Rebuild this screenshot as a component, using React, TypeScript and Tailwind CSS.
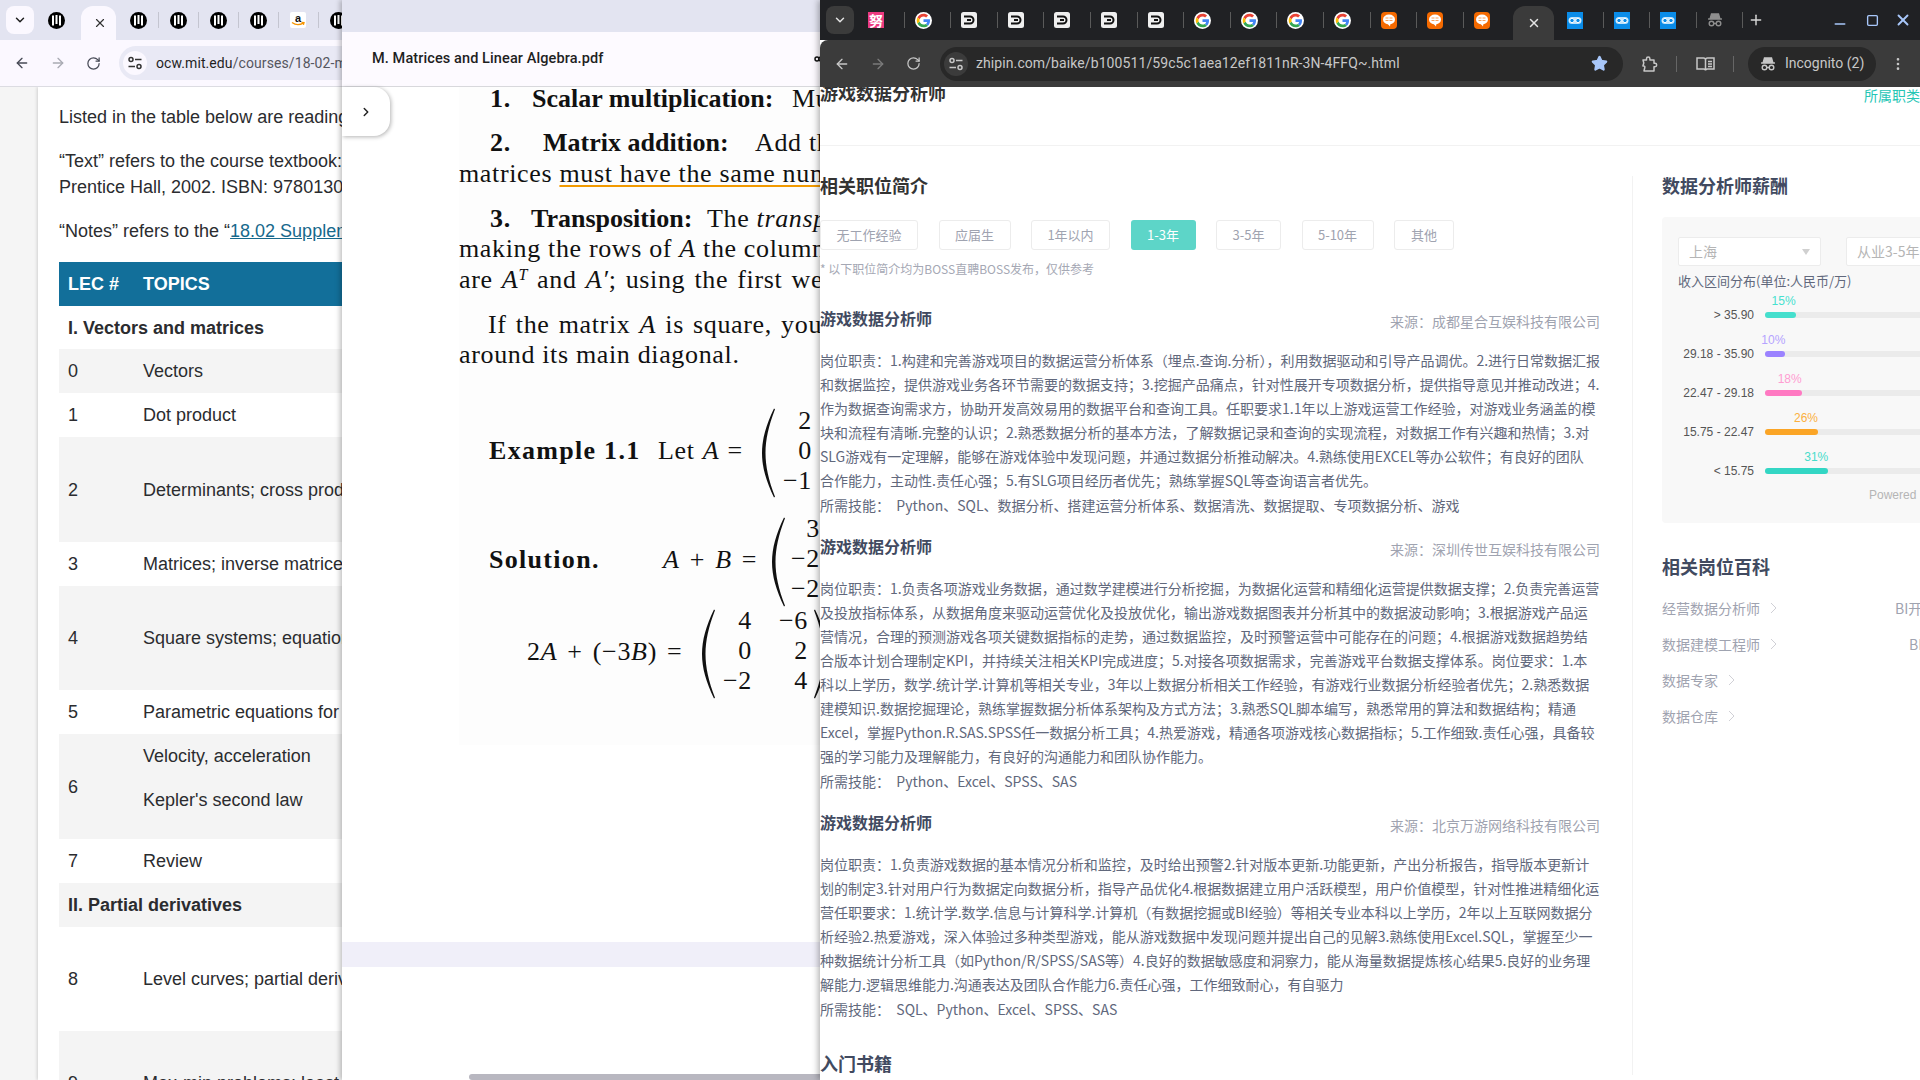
import { ArrowLeft, ArrowRight, RotateCw, ChevronDown, ChevronRight, X, Star, Plus, Minus, Square, EllipsisVertical, Share2 } from "lucide-react";

const ROWS = [
  { lec: "", text: "I. Vectors and matrices", h: "h-[43px]", bold: true },
  { lec: "0", text: "Vectors", h: "h-[44px]" },
  { lec: "1", text: "Dot product", h: "h-[44px]" },
  { lec: "2", text: "Determinants; cross product", h: "h-[105px]" },
  { lec: "3", text: "Matrices; inverse matrices", h: "h-[44px]" },
  { lec: "4", text: "Square systems; equations of planes", h: "h-[104px]" },
  { lec: "5", text: "Parametric equations for lines and curves", h: "h-[44px]" },
  { lec: "6", text: "Velocity, acceleration", text2: "Kepler's second law", h: "h-[105px]" },
  { lec: "7", text: "Review", h: "h-[44px]" },
  { lec: "", text: "II. Partial derivatives", h: "h-[44px]", bold: true },
  { lec: "8", text: "Level curves; partial derivatives; tangent plane", h: "h-[104px]" },
  { lec: "9", text: "Max-min problems; least squares", h: "h-[104px]" },
];

const JOBS = [
  {
    source: "来源：成都星合互娱科技有限公司",
    lines: [
      "岗位职责：1.构建和完善游戏项目的数据运营分析体系（埋点.查询.分析），利用数据驱动和引导产品调优。2.进行日常数据汇报",
      "和数据监控，提供游戏业务各环节需要的数据支持；3.挖掘产品痛点，针对性展开专项数据分析，提供指导意见并推动改进；4.",
      "作为数据查询需求方，协助开发高效易用的数据平台和查询工具。任职要求1.1年以上游戏运营工作经验，对游戏业务涵盖的模",
      "块和流程有清晰.完整的认识；2.熟悉数据分析的基本方法，了解数据记录和查询的实现流程，对数据工作有兴趣和热情；3.对",
      "SLG游戏有一定理解，能够在游戏体验中发现问题，并通过数据分析推动解决。4.熟练使用EXCEL等办公软件；有良好的团队",
      "合作能力，主动性.责任心强；5.有SLG项目经历者优先；熟练掌握SQL等查询语言者优先。",
    ],
    skills: "Python、SQL、数据分析、搭建运营分析体系、数据清洗、数据提取、专项数据分析、游戏",
  },
  {
    source: "来源：深圳传世互娱科技有限公司",
    lines: [
      "岗位职责：1.负责各项游戏业务数据，通过数学建模进行分析挖掘，为数据化运营和精细化运营提供数据支撑；2.负责完善运营",
      "及投放指标体系，从数据角度来驱动运营优化及投放优化，输出游戏数据图表并分析其中的数据波动影响；3.根据游戏产品运",
      "营情况，合理的预测游戏各项关键数据指标的走势，通过数据监控，及时预警运营中可能存在的问题；4.根据游戏数据趋势结",
      "合版本计划合理制定KPI，并持续关注相关KPI完成进度；5.对接各项数据需求，完善游戏平台数据支撑体系。岗位要求：1.本",
      "科以上学历，数学.统计学.计算机等相关专业，3年以上数据分析相关工作经验，有游戏行业数据分析经验者优先；2.熟悉数据",
      "建模知识.数据挖掘理论，熟练掌握数据分析体系架构及方式方法；3.熟悉SQL脚本编写，熟悉常用的算法和数据结构；精通",
      "Excel，掌握Python.R.SAS.SPSS任一数据分析工具；4.热爱游戏，精通各项游戏核心数据指标；5.工作细致.责任心强，具备较",
      "强的学习能力及理解能力，有良好的沟通能力和团队协作能力。",
    ],
    skills: "Python、Excel、SPSS、SAS",
  },
  {
    source: "来源：北京万游网络科技有限公司",
    lines: [
      "岗位职责：1.负责游戏数据的基本情况分析和监控，及时给出预警2.针对版本更新.功能更新，产出分析报告，指导版本更新计",
      "划的制定3.针对用户行为数据定向数据分析，指导产品优化4.根据数据建立用户活跃模型，用户价值模型，针对性推进精细化运",
      "营任职要求：1.统计学.数学.信息与计算科学.计算机（有数据挖掘或BI经验）等相关专业本科以上学历，2年以上互联网数据分",
      "析经验2.热爱游戏，深入体验过多种类型游戏，能从游戏数据中发现问题并提出自己的见解3.熟练使用Excel.SQL，掌握至少一",
      "种数据统计分析工具（如Python/R/SPSS/SAS等）4.良好的数据敏感度和洞察力，能从海量数据提炼核心结果5.良好的业务理",
      "解能力.逻辑思维能力.沟通表达及团队合作能力6.责任心强，工作细致耐心，有自驱力",
    ],
    skills: "SQL、Python、Excel、SPSS、SAS",
  },
];

const SALARY = [
  { label: "> 35.90", pct: 15, bar: "bg-[#45dfcd]", text: "text-[#47e1cf]" },
  { label: "29.18 - 35.90", pct: 10, bar: "bg-[#9b82ff]", text: "text-[#b5a3ff]" },
  { label: "22.47 - 29.18", pct: 18, bar: "bg-[#ff79c2]", text: "text-[#ff9dd2]" },
  { label: "15.75 - 22.47", pct: 26, bar: "bg-[#fba526]", text: "text-[#fbb040]" },
  { label: "< 15.75", pct: 31, bar: "bg-[#33d6c4]", text: "text-[#47dccb]" },
];

const FILTERS = [
  { label: "无工作经验", w: "w-[98px]" },
  { label: "应届生", w: "w-[72px]" },
  { label: "1年以内", w: "w-[79px]" },
  { label: "1-3年", w: "w-[65px]", active: true },
  { label: "3-5年", w: "w-[65px]" },
  { label: "5-10年", w: "w-[72px]" },
  { label: "其他", w: "w-[60px]" },
];

const RELATED = [
  { a: "经营数据分析师", b: "BI开发工程师", bw: "ml-[0px]" },
  { a: "数据建模工程师", b: "BI工程师", bw: "ml-[14px]" },
  { a: "数据专家" },
  { a: "数据仓库" },
];

function TuneIcon({ color }: { color: string }) {
  return (
    <svg width="16" height="16" viewBox="0 0 16 16" fill="none" stroke={color} strokeWidth="1.5">
      <circle cx="4" cy="4.5" r="2" />
      <path d="M8 4.5h6.5M1.5 11.5H8" />
      <circle cx="12" cy="11.5" r="2" />
    </svg>
  );
}

function MitIcon() {
  return (
    <svg width="17" height="17" viewBox="0 0 17 17">
      <circle cx="8.5" cy="8.5" r="8.5" fill="#000" />
      <path d="M4 3.5h2v10H4zM7.5 3h2v9h-2zM11 3.5h2v10h-2z" fill="#fff" />
    </svg>
  );
}

function AmazonIcon() {
  return (
    <svg width="16" height="16" viewBox="0 0 16 16">
      <rect width="16" height="16" rx="2" fill="#fff" />
      <text x="8" y="9.5" textAnchor="middle" fontSize="11" fontWeight="700" fontFamily="Liberation Sans" fill="#111">a</text>
      <path d="M2 10.5c3.5 2.6 8 2.6 11.5.4M11.5 10.5l2.5.1-.6 2.2" fill="none" stroke="#f79400" strokeWidth="1.3" />
    </svg>
  );
}

function GoogleIcon() {
  return (
    <svg width="17" height="17" viewBox="-6 -6 60 60">
      <circle cx="24" cy="24" r="30" fill="#fff" />
      <path fill="#EA4335" d="M24 9.5c3.54 0 6.71 1.22 9.21 3.6l6.85-6.85C35.9 2.38 30.47 0 24 0 14.62 0 6.51 5.38 2.56 13.22l7.98 6.19C12.43 13.72 17.74 9.5 24 9.5z" />
      <path fill="#4285F4" d="M46.98 24.55c0-1.57-.15-3.09-.38-4.55H24v9.02h12.94c-.58 2.96-2.26 5.48-4.78 7.18l7.73 6c4.51-4.18 7.09-10.36 7.09-17.65z" />
      <path fill="#FBBC05" d="M10.53 28.59c-.48-1.45-.76-2.99-.76-4.59s.27-3.14.76-4.59l-7.98-6.19C.92 16.46 0 20.12 0 24c0 3.88.92 7.54 2.56 10.78l7.97-6.19z" />
      <path fill="#34A853" d="M24 48c6.48 0 11.93-2.13 15.89-5.81l-7.73-6c-2.15 1.45-4.92 2.3-8.16 2.3-6.26 0-11.57-4.22-13.47-9.91l-7.98 6.19C6.51 42.62 14.62 48 24 48z" />
    </svg>
  );
}

function DocIcon() {
  return (
    <svg width="16" height="16" viewBox="0 0 16 16">
      <rect width="16" height="16" rx="2.5" fill="#efefef" />
      <path d="M3 4.5h6a3.5 3.5 0 0 1 0 7H3" fill="none" stroke="#111" strokeWidth="2" />
      <path d="M6 8h4" stroke="#111" strokeWidth="2" />
    </svg>
  );
}

function ChatIcon() {
  return (
    <svg width="16" height="17" viewBox="0 0 16 17">
      <rect width="16" height="17" rx="4" fill="#f56a00" />
      <ellipse cx="8" cy="7.5" rx="6" ry="5" fill="#fff" />
      <path d="M6 11l3 3.5.5-3.5z" fill="#fff" />
      <path d="M4.5 6h3M8.5 6h3M4.5 8.5h3M8.5 8.5h3" stroke="#f9a05c" strokeWidth="1.2" />
    </svg>
  );
}

function BlueIcon() {
  return (
    <svg width="16" height="17" viewBox="0 0 16 17">
      <rect width="16" height="17" fill="#0a8ce8" />
      <rect x="1.5" y="5" width="13" height="7" rx="3.5" fill="#bfe3fb" />
      <circle cx="5" cy="8.5" r="2.2" fill="#0a8ce8" stroke="#fff" />
      <circle cx="11" cy="8.5" r="2.2" fill="#0a8ce8" stroke="#fff" />
    </svg>
  );
}

function IncognitoIcon({ color, size = 16 }: { color: string; size?: number }) {
  return (
    <svg width={size} height={size} viewBox="0 0 16 16" fill="none" stroke={color} strokeWidth="1.4">
      <path d="M4.5 2h7l1.3 4.5H3.2z" fill={color} />
      <path d="M1 7h14" />
      <circle cx="4.5" cy="11.5" r="2.3" />
      <circle cx="11.5" cy="11.5" r="2.3" />
      <path d="M6.8 11.5h2.4" />
    </svg>
  );
}

function ExtensionIcon() {
  return (
    <svg width="18" height="18" viewBox="0 0 18 18" fill="none" stroke="#c7c7c7" strokeWidth="1.5" className="flex-none">
      <path d="M3 5h3.5V3.8a1.7 1.7 0 0 1 3.4 0V5H14v3.3h1a1.7 1.7 0 0 1 0 3.4h-1V16H4l.8-3.5c.2-.8-.2-1.5-1-1.5H2.9l.9-3z" strokeLinejoin="round" />
    </svg>
  );
}

function ReaderIcon() {
  return (
    <svg width="19" height="18" viewBox="0 0 19 18" fill="none" stroke="#c7c7c7" strokeWidth="1.5" className="flex-none">
      <path d="M1 3h6.5c1.2 0 2 .8 2 2v10.5c0-1-.8-1.5-2-1.5H1zM18 3h-6.500c-1.200 0-2 .8-2 2v10.500c0-1 .8-1.500 2-1.500H18z" />
      <path d="M12 6.500h4M12 9h4M12 11.500h4" />
    </svg>
  );
}

function PinkIcon() {
  return (
    <div className="flex h-4 w-4 items-center justify-center overflow-hidden bg-[#ec3a80] text-[14px] font-bold leading-4 text-white font-['Noto_Sans_CJK_SC',sans-serif]">
      努
    </div>
  );
}

function LeftTab({ children }: { children: React.ReactNode }) {
  return (
    <div className="flex h-full w-10 flex-none items-center pl-[11px]">
      {children}
      <div className="ml-auto h-4 w-px bg-[#c4c5d0]" />
    </div>
  );
}

function DarkTab({ children, noSep }: { children: React.ReactNode; noSep?: boolean }) {
  return (
    <div className="flex h-full w-[46.6px] flex-none items-center pl-[10px]">
      {children}
      {!noSep && <div className="ml-auto h-4 w-px bg-[#5a5a5a]" />}
    </div>
  );
}

function LeftWindow() {
  return (
    <div className="absolute left-0 top-0 flex h-[1080px] w-[342px] flex-col overflow-hidden font-['Roboto',sans-serif]">
      <div className="flex h-10 flex-none items-center bg-[#e3e4f1]">
        <div className="ml-[6px] mr-[3px] flex h-7 w-7 flex-none items-center justify-center rounded-lg bg-[#fbf8ff]">
          <ChevronDown size={14} strokeWidth={2.5} color="#1f1f1f" />
        </div>
        <div className="flex h-full w-11 flex-none items-center pl-[11px]">
          <MitIcon />
        </div>
        <div className="mt-[6px] flex h-[34px] w-[35px] flex-none items-center justify-center rounded-t-xl bg-[#fbf8ff] pl-[3px]">
          <X size={14} strokeWidth={2} color="#333" />
        </div>
        <div className="ml-[3px] flex h-full">
          <LeftTab><MitIcon /></LeftTab>
          <LeftTab><MitIcon /></LeftTab>
          <LeftTab><MitIcon /></LeftTab>
          <LeftTab><MitIcon /></LeftTab>
          <LeftTab><AmazonIcon /></LeftTab>
          <LeftTab><MitIcon /></LeftTab>
        </div>
      </div>
      <div className="flex h-[47px] flex-none items-center border-b border-[#dcdce2] bg-[#fbf8ff]">
        <ArrowLeft size={16} strokeWidth={2} color="#474a56" className="ml-[14px] flex-none" />
        <ArrowRight size={16} strokeWidth={2} color="#a9aab3" className="ml-5 flex-none" />
        <RotateCw size={15} strokeWidth={2} color="#474a56" className="ml-5 flex-none" />
        <div className="ml-[18px] flex h-[34px] w-[400px] flex-none items-center rounded-l-full bg-[#e9e9f5]">
          <div className="ml-[4px] flex h-[24px] w-[24px] flex-none items-center justify-center rounded-full bg-[#fbf8ff]">
            <TuneIcon color="#333" />
          </div>
          <span className="ml-[9px] whitespace-nowrap text-[14px] tracking-[0.09px] text-[#1f1f1f]">
            ocw.mit.edu<span className="text-[#55565f]">/courses/18-02-multivariable</span>
          </span>
        </div>
      </div>
      <div className="flex-1 overflow-hidden bg-[#f5f5f5] pl-[38px] font-['Liberation_Sans',sans-serif]">
        <div className="h-full w-[400px] bg-white pl-[21px] text-[18px] leading-[26px] text-[#2b2c2f] shadow-[-1px_0_3px_rgba(0,0,0,0.15)]">
          <p className="whitespace-nowrap pt-[17px]">Listed in the table below are reading assignments</p>
          <p className="mt-[18px] whitespace-nowrap">
            “Text” refers to the course textbook: Edwards<br />
            Prentice Hall, 2002. ISBN: 9780130339676
          </p>
          <p className="mt-[18px] whitespace-nowrap">
            “Notes” refers to the “<span className="text-[#17698c] underline">18.02 Supplementary Notes</span>
          </p>
          <div className="mt-[18px] flex h-11 items-center bg-[#126f9a] font-bold text-white">
            <span className="w-[84px] pl-[9px]">LEC #</span>
            <span>TOPICS</span>
          </div>
          {ROWS.map((r, i) => (
            <div key={i} className={`flex items-center whitespace-nowrap ${r.h} ${i % 2 === 1 ? "bg-[#f4f4f4]" : "bg-white"}`}>
              {r.bold ? (
                <span className="pl-[9px] font-bold">{r.text}</span>
              ) : (
                <>
                  <span className="w-[84px] flex-none pl-[9px]">{r.lec}</span>
                  {r.text2 ? (
                    <div className="flex flex-col gap-[18px] pb-[17px]">
                      <span>{r.text}</span>
                      <span>{r.text2}</span>
                    </div>
                  ) : (
                    <span>{r.text}</span>
                  )}
                </>
              )}
            </div>
          ))}
        </div>
      </div>
    </div>
  );
}

function Paren({ flip }: { flip?: boolean }) {
  return (
    <svg width="13" height="90" viewBox="0 0 13 90" className={`flex-none ${flip ? "-scale-x-100" : ""}`}>
      <path d="M12 0.5C4 17 0 31 0 45s4 28 12 44.5l1-.8C6.5 72 3.5 58 3.500 45S6.500 18 13 1.300z" fill="#111" />
    </svg>
  );
}

function Col({ w, items, cls }: { w: string; items: string[]; cls: string }) {
  return (
    <div className={`flex flex-none flex-col items-end text-[26px] leading-[30px] ${w} ${cls}`}>
      {items.map((v, i) => (
        <span key={i}>{v}</span>
      ))}
    </div>
  );
}

function PdfWindow() {
  return (
    <div className="absolute left-[342px] top-0 flex h-[1080px] w-[600px] flex-col overflow-hidden shadow-[-2px_0_5px_rgba(0,0,0,0.25)]">
      <div className="h-8 flex-none bg-[#e3e4f1]" />
      <div className="flex h-[55px] flex-none items-center border-b border-[#d8d8dc] bg-[#fdfaff] pl-[30px] font-['Roboto',sans-serif] text-[14.5px] font-medium tracking-[0.1px] text-[#1f1f1f]">
        <span className="w-[441px] flex-none">M. Matrices and Linear Algebra.pdf</span>
        <Share2 size={16} strokeWidth={2.2} color="#111" className="flex-none" />
      </div>
      <div className="relative flex flex-1 flex-col bg-white">
        <div className="absolute left-0 top-0 flex h-[49px] w-[48px] items-center justify-center rounded-r-2xl bg-white shadow-[1px_1px_4px_rgba(0,0,0,0.3)]">
          <ChevronRight size={14} strokeWidth={2.5} color="#222" />
        </div>
        <div className="ml-[117px] h-[658px] flex-none overflow-hidden bg-[#fdfdfd] whitespace-nowrap font-['Liberation_Serif',serif] text-[26px] leading-[30px] tracking-[0.025em] text-[#111]">
          <div className="-mt-[3px] ml-[31px] flex">
            <span className="w-[42px] font-bold">1.</span>
            <span className="w-[260px] font-bold tracking-normal">Scalar multiplication:</span>
            <span>Multiply</span>
          </div>
          <div className="ml-[31px] mt-[14px] flex">
            <span className="w-[53px] font-bold">2.</span>
            <span className="w-[212px] font-bold tracking-normal">Matrix addition:</span>
            <span>Add the</span>
          </div>
          <div className="mt-[1px]">
            matrices <span className="underline decoration-[#f29a00] decoration-2 underline-offset-[3px]">must have the same number of rows</span>
          </div>
          <div className="ml-[31px] mt-[15px] flex">
            <span className="w-[41px] font-bold">3.</span>
            <span className="w-[176px] font-bold tracking-normal">Transposition:</span>
            <span>The <em>transpose</em></span>
          </div>
          <div>making the rows of <em>A</em> the columns</div>
          <div className="mt-[1px] [word-spacing:2px]">are <em>A</em><sup className="text-[16px] italic">T</sup> and <em>A′</em>; using the first we</div>
          <div className="ml-[29px] mt-[15px] [word-spacing:2px]">If the matrix <em>A</em> is square, you</div>
          <div>around its main diagonal.</div>

          <div className="ml-[30px] mt-[38px] flex h-[90px] items-start">
            <span className="mt-[28px] w-[169px] flex-none font-bold tracking-[0.05em]">Example 1.1</span>
            <span className="mt-[28px] w-[104px] flex-none [word-spacing:1px]">Let <em>A</em> =</span>
            <Paren />
            <Col w="w-[37px]" cls="-mt-[2px]" items={["2", "0", "−1"]} />
          </div>
          <div className="ml-[30px] mt-[19px] flex h-[90px] items-start">
            <span className="mt-[28px] w-[174px] flex-none font-bold tracking-[0.05em]">Solution.</span>
            <span className="mt-[28px] w-[109px] flex-none [word-spacing:3px]"><em>A</em> + <em>B</em> =</span>
            <Paren />
            <Col w="w-[35px]" cls="-mt-[3px]" items={["3", "−2", "−2"]} />
          </div>
          <div className="ml-[68px] mt-[2px] flex h-[90px] items-start">
            <span className="mt-[28px] w-[175px] flex-none [word-spacing:3px]">2<em>A</em> + (−3<em>B</em>) =</span>
            <Paren />
            <Col w="w-[37px]" cls="-mt-[3px]" items={["4", "0", "−2"]} />
            <Col w="w-[56px]" cls="-mt-[3px]" items={["−6", "2", "4"]} />
            <div className="ml-[6px]"><Paren flip /></div>
          </div>
        </div>
        <div className="h-[197px] flex-none" />
        <div className="h-[25px] flex-none bg-[#f0eff9]" />
        <div className="absolute bottom-0 left-[127px] h-[6px] w-[400px] rounded-l-full bg-[#b8b7c0]" />
      </div>
    </div>
  );
}

function RightWindow() {
  return (
    <div className="absolute left-[820px] top-0 flex h-[1080px] w-[1100px] flex-col overflow-hidden bg-white shadow-[-2px_0_6px_rgba(0,0,0,0.3)]">
      <div className="flex h-10 flex-none items-center bg-[#202124] font-['Roboto',sans-serif]">
        <div className="ml-[6px] mr-[4px] flex h-7 w-7 flex-none items-center justify-center rounded-lg bg-[#3b3b3b]">
          <ChevronDown size={14} strokeWidth={2.5} color="#e3e3e3" />
        </div>
        <div className="flex h-full">
          <DarkTab><PinkIcon /></DarkTab>
          <DarkTab><GoogleIcon /></DarkTab>
          <DarkTab><DocIcon /></DarkTab>
          <DarkTab><DocIcon /></DarkTab>
          <DarkTab><DocIcon /></DarkTab>
          <DarkTab><DocIcon /></DarkTab>
          <DarkTab><DocIcon /></DarkTab>
          <DarkTab><GoogleIcon /></DarkTab>
          <DarkTab><GoogleIcon /></DarkTab>
          <DarkTab><GoogleIcon /></DarkTab>
          <DarkTab><GoogleIcon /></DarkTab>
          <DarkTab><ChatIcon /></DarkTab>
          <DarkTab><ChatIcon /></DarkTab>
          <DarkTab noSep><ChatIcon /></DarkTab>
          <div className="flex h-full w-[46.6px] flex-none justify-center pt-[6px]">
            <div className="flex h-[34px] w-[41px] items-center justify-center rounded-t-xl bg-[#3b3b3b]">
              <X size={14} strokeWidth={2.5} color="#e3e3e3" />
            </div>
          </div>
          <DarkTab><BlueIcon /></DarkTab>
          <DarkTab><BlueIcon /></DarkTab>
          <DarkTab><BlueIcon /></DarkTab>
          <DarkTab><IncognitoIcon color="#8e8e8e" /></DarkTab>
        </div>
        <Plus size={16} strokeWidth={2.2} color="#d6d6d6" className="ml-[5px] flex-none" />
        <Minus size={16} strokeWidth={2.5} color="#a8c7fa" className="ml-[68px] mt-2 flex-none" />
        <Square size={13} strokeWidth={2.5} color="#a8c7fa" className="ml-[18px] flex-none" />
        <X size={18} strokeWidth={2.5} color="#a8c7fa" className="ml-[15px] flex-none" />
      </div>
      <div className="z-10 flex h-[47px] flex-none items-center rounded-tl-lg bg-[#3b3b3b] font-['Roboto',sans-serif]">
        <ArrowLeft size={16} strokeWidth={2} color="#c7c7c7" className="ml-[14px] flex-none" />
        <ArrowRight size={16} strokeWidth={2} color="#7b7b7b" className="ml-5 flex-none" />
        <RotateCw size={15} strokeWidth={2} color="#c7c7c7" className="ml-5 flex-none" />
        <div className="ml-[19px] flex h-[34px] w-[683px] flex-none items-center rounded-full bg-[#282828]">
          <div className="ml-[4px] flex h-[24px] w-[24px] flex-none items-center justify-center rounded-full bg-[#3b3b3b]">
            <TuneIcon color="#c7c7c7" />
          </div>
          <span className="ml-[8px] whitespace-nowrap text-[14px] tracking-[0.09px] text-[#c7c7c7]">zhipin.com/baike/b100511/59c5c1aea12ef1811nR-3N-4FFQ~.html</span>
          <Star size={17} fill="#a8c7fa" color="#a8c7fa" className="ml-auto mr-[15px] flex-none" />
        </div>
        <div className="ml-[17px] flex-none"><ExtensionIcon /></div>
        <div className="ml-[18px] h-4 w-px flex-none bg-[#666]" />
        <div className="ml-[19px] flex-none"><ReaderIcon /></div>
        <div className="ml-[18px] h-4 w-px flex-none bg-[#666]" />
        <div className="ml-[14px] flex h-[34px] w-[128px] flex-none items-center rounded-full bg-[#282828] pl-[12px] text-[14px] text-[#c7c7c7]">
          <IncognitoIcon color="#c7c7c7" />
          <span className="ml-[9px] whitespace-nowrap">Incognito (2)</span>
        </div>
        <EllipsisVertical size={16} strokeWidth={2} color="#c7c7c7" className="ml-[14px] flex-none" />
      </div>
      <div className="flex-1 overflow-hidden font-['Noto_Sans_CJK_SC',sans-serif]">
        <div className="-mt-[7px] flex h-[66px] items-start justify-between border-b border-[#f2f2f2]">
          <span className="text-[18px] font-bold leading-6 text-[#333]">游戏数据分析师</span>
          <span className="mt-[3px] text-[14px] leading-6 text-[#26c6b5]">所属职类</span>
        </div>
        <div className="mt-[30px] flex">
          <div className="w-[780px] flex-none">
            <h2 className="-mt-[3px] text-[18px] font-bold leading-6 text-[#333]">相关职位简介</h2>
            <div className="mt-[23px] flex gap-[20.500px]">
              {FILTERS.map((f) => (
                <div
                  key={f.label}
                  className={`flex h-[30px] items-center justify-center rounded-[3px] text-[13px] ${f.w} ${f.active ? "bg-[#5dd5c8] text-white" : "border border-[#ececec] text-[#9fa3b0]"}`}
                >
                  {f.label}
                </div>
              ))}
            </div>
            <p className="mt-[10px] text-[12px] leading-[18px] text-[#a5a8b4]">* 以下职位简介均为BOSS直聘BOSS发布，仅供参考</p>
            <div className="mt-[28px]">
              {JOBS.map((job) => (
                <div key={job.source} className="mb-[17px]">
                  <div className="flex justify-between">
                    <span className="text-[16px] font-bold leading-6 text-[#414a60]">游戏数据分析师</span>
                    <span className="mt-[3px] text-[14px] leading-6 text-[#9fa3b0]">{job.source}</span>
                  </div>
                  <div className="mt-[15px] whitespace-nowrap text-[14px] leading-6 text-[#61687c]">
                    {job.lines.map((line) => (
                      <div key={line}>{line}</div>
                    ))}
                    <div className="mt-[1px]">所需技能：&nbsp;&nbsp;{job.skills}</div>
                  </div>
                </div>
              ))}
            </div>
            <h2 className="mt-[30px] text-[18px] font-bold leading-6 text-[#414a60]">入门书籍</h2>
          </div>
          <div className="ml-[32px] w-[400px] flex-none border-l border-[#f2f2f2] pl-[29px]">
            <h2 className="-mt-[3px] text-[18px] font-bold leading-6 text-[#414a60]">数据分析师薪酬</h2>
            <div className="mt-[20px] h-[306px] w-[400px] rounded bg-[#f8f8f8] pl-4 pt-5">
              <div className="flex gap-[25px]">
                <div className="flex h-[29px] w-[143px] items-center rounded-[2px] border border-[#ececec] bg-white pl-[10px] pr-[10px] text-[14px] text-[#b5b5b5]">
                  <span>上海</span>
                  <div className="ml-auto h-0 w-0 border-x-[4px] border-t-[6px] border-x-transparent border-t-[#d0d0d0]" />
                </div>
                <div className="flex h-[29px] w-[143px] items-center rounded-[2px] border border-[#ececec] bg-white pl-[10px] text-[14px] text-[#b5b5b5]">
                  从业3-5年
                </div>
              </div>
              <p className="mt-[6px] text-[13px] leading-[18px] text-[#61687c]">收入区间分布(单位:人民币/万)</p>
              <div className="mt-[5px] font-['Liberation_Sans',sans-serif]">
                {SALARY.map((s) => (
                  <div key={s.label} className="flex h-[39px] items-center">
                    <span className="w-[76px] flex-none whitespace-nowrap text-right text-[12px] text-[#555]">{s.label}</span>
                    <div className="ml-[11px] h-[6px] w-[200px] flex-none rounded-full bg-[#ebebeb]">
                      <div className={`relative h-full rounded-full ${s.bar}`} style={{ width: (s.pct * 2.04) + "px" }}>
                        <span className={`absolute -top-[20px] right-0 text-[12px] leading-[18px] ${s.text}`}>{s.pct}%</span>
                      </div>
                    </div>
                  </div>
                ))}
              </div>
              <p className="-mt-[3px] ml-[191px] font-['Liberation_Sans',sans-serif] text-[12px] leading-4 text-[#b5b5b5]">Powered</p>
            </div>
            <h2 className="mt-[31px] text-[18px] font-bold leading-6 text-[#414a60]">相关岗位百科</h2>
            <div className="mt-[12px]">
              {RELATED.map((r) => (
                <div key={r.a} className="flex h-9 items-center text-[14px] text-[#9fa3b0]">
                  <span className={r.b ? "flex w-[233px] flex-none items-center" : "flex items-center"}>
                    {r.a}
                    <svg width="7" height="12" viewBox="0 0 7 12" className="ml-[10px]" fill="none" stroke="#d0d0d6">
                      <path d="M1 1l5 5-5 5" />
                    </svg>
                  </span>
                  {r.b && <span className={`whitespace-nowrap ${r.bw}`}>{r.b}</span>}
                </div>
              ))}
            </div>
          </div>
        </div>
      </div>
    </div>
  );
}

export default function App() {
  return (
    <div className="relative h-[1080px] w-[1920px] overflow-hidden bg-white">
      <LeftWindow />
      <PdfWindow />
      <RightWindow />
    </div>
  );
}
